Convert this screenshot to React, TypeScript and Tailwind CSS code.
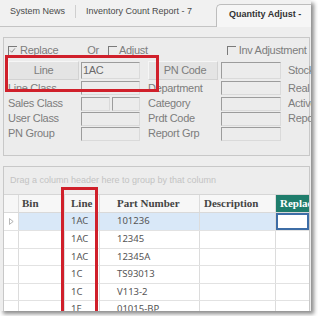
import React from "react";

type Row = { line: string; part: string };

const rows: Row[] = [
  { line: "1AC", part: "101236" },
  { line: "1AC", part: "12345" },
  { line: "1AC", part: "12345A" },
  { line: "1C", part: "TS93013" },
  { line: "1C", part: "V113-2" },
  { line: "1E", part: "01015-BP" },
];

function Field({ className = "" }: { className?: string }) {
  return (
    <div
      className={`h-[14px] shrink-0 border-t-[1.5px] border-l-[1.5px] border-r border-b border-t-[#9c9c9c] border-l-[#9c9c9c] border-r-[#dadada] border-b-[#dadada] bg-[#ececec] ${className}`}
    />
  );
}

function Check({ checked = false }: { checked?: boolean }) {
  return (
    <span className="relative inline-block h-[9px] w-[9px] shrink-0 border-t-[1.5px] border-l-[1.5px] border-[#7a7a7a]">
      {checked && (
        <svg viewBox="0 0 10 10" className="absolute left-0 top-0 h-[7px] w-[7px]">
          <path d="M1.5 5 L4 7.5 L8.5 2" fill="none" stroke="#8a8a8a" strokeWidth="1.4" />
        </svg>
      )}
    </span>
  );
}

function FormRow({ a, b, c, split }: { a: string; b: string; c: string; split?: boolean }) {
  return (
    <div className="flex h-[15px] items-center">
      <span className="w-[73px] shrink-0 whitespace-nowrap">{a}</span>
      {split ? (
        <div className="flex w-[59px] shrink-0 gap-[2px]">
          <Field className="w-[29px]" />
          <Field className="w-[28px]" />
        </div>
      ) : (
        <Field className="w-[59px]" />
      )}
      <span className="ml-[8px] w-[73px] shrink-0 whitespace-nowrap">{b}</span>
      <Field className="w-[60px]" />
      <span className="ml-[7px] whitespace-nowrap">{c}</span>
    </div>
  );
}

export default function App() {
  return (
    <div className="relative h-[316px] w-[318px] overflow-hidden bg-white">
      <div className="relative h-[311px] w-[311px] overflow-hidden bg-[#eeeeee] shadow-[3px_3px_4px_rgba(0,0,0,0.45)]">
        {/* tabs */}
        <div className="flex h-[27px] items-end border-b border-[#c4c4c4] bg-[#f1f1f1] font-['Liberation_Sans',Arial,sans-serif] text-[9px] text-[#4a4a4a]">
          <div className="flex h-full items-center pb-[2px] pl-[10px] whitespace-nowrap">System News</div>
          <div className="mx-[10px] mb-[4px] h-[13px] w-px self-center bg-[#cfcfcf]" />
          <div className="flex h-full items-center pb-[2px] whitespace-nowrap">Inventory Count Report - 7</div>
          <div className="relative -mb-px ml-auto flex h-[23px] w-[95px] shrink-0 items-start rounded-tl-[5px] border border-r-0 border-b-0 border-[#bdbdbd] bg-[#f6f6f6] pl-[12px] pt-[3px] font-bold whitespace-nowrap text-[#333]">
            Quantity Adjust -
          </div>
        </div>

        {/* filter panel */}
        <div className="relative ml-[3px] mt-[10px] h-[119px] w-[307px] border border-[#c8c8c8] bg-[#ececec] pl-[4px] font-['Liberation_Sans',Arial,sans-serif] text-[11px] tracking-[-0.3px] text-[#7d7d7d]">
          <div className="mt-[5px] flex h-[14px] items-center">
            <Check checked />
            <span className="ml-[3px]">Replace</span>
            <span className="ml-[29px]">Or</span>
            <span className="ml-[9px] flex">
              <Check />
            </span>
            <span className="ml-[2px]">Adjust</span>
            <span className="ml-[79px] flex">
              <Check />
            </span>
            <span className="ml-[3px]">Inv Adjustment</span>
          </div>

          <div className="mt-[4px] flex h-[19px] items-center">
            <div className="flex h-[19px] w-[71px] shrink-0 items-center justify-center border border-t-[#f6f6f6] border-l-[#f6f6f6] border-r-[#d2d2d2] border-b-[#d2d2d2] bg-[#e4e4e4]">
              Line
            </div>
            <div className="ml-[2px] flex h-[17px] w-[59px] shrink-0 items-center border-t-[1.5px] border-l-[1.5px] border-r border-b border-t-[#9c9c9c] border-l-[#9c9c9c] border-r-[#dadada] border-b-[#dadada] bg-[#ececec] pl-[1px] text-[#6a6a6a]">
              1AC
            </div>
            <div className="ml-[8px] flex h-[19px] w-[70px] shrink-0 items-center justify-center border border-t-[#f6f6f6] border-l-[#f6f6f6] border-r-[#d2d2d2] border-b-[#d2d2d2] bg-[#e4e4e4] pl-[4px]">
              PN Code
            </div>
            <Field className="ml-[3px] h-[17px] w-[60px]" />
            <span className="ml-[7px]">Stock</span>
          </div>

          <div className="flex h-[16px] items-center">
            <span className="w-[73px] shrink-0">Line Class</span>
            <Field className="w-[59px]" />
            <span className="ml-[8px] w-[73px] shrink-0">Department</span>
            <Field className="w-[60px]" />
            <span className="ml-[7px]">Real</span>
          </div>
          <FormRow a="Sales Class" b="Category" c="Active" split />
          <FormRow a="User Class" b="Prdt Code" c="Report" />
          <FormRow a="PN Group" b="Report Grp" c="" />
        </div>

        {/* grid */}
        <div className="ml-[3px] mt-[10px] h-[150px] w-[307px] overflow-hidden border border-[#c8c8c8] bg-white">
          <div className="flex h-[28px] items-center border-b border-[#d6d6d6] bg-[#ededed] pl-[6px] font-['Liberation_Sans',Arial,sans-serif] text-[9px] text-[#c3c3c3]">
            Drag a column header here to group by that column
          </div>
          <div className="flex h-[18px] border-b border-[#d9d9d9] bg-[#f7f7f7] font-['Liberation_Serif',serif] text-[11px] font-bold text-[#444]">
            <div className="w-[15px] shrink-0 border-r border-[#dcdcdc]" />
            <div className="flex w-[46px] shrink-0 items-center border-r border-[#dcdcdc] pl-[3px]">Bin</div>
            <div className="flex w-[35px] shrink-0 items-center border-r border-[#dcdcdc] pl-[6px]">Line</div>
            <div className="flex w-[100px] shrink-0 items-center border-r border-[#dcdcdc] pl-[17px]">Part Number</div>
            <div className="flex w-[76px] shrink-0 items-center border-r border-[#dcdcdc] pl-[4px]">Description</div>
            <div className="flex flex-1 items-center bg-[#1f7d6c] pl-[4px] text-white">Replace</div>
          </div>
          {rows.map((r, i) => {
            const sel = i === 0;
            return (
              <div
                key={i}
                className={`flex border-b border-[#e2e2e2] font-['Noto_Sans',sans-serif] text-[9.5px] text-[#555] ${sel ? "h-[18px]" : "h-[17.5px]"}`}
              >
                <div className="flex w-[15px] shrink-0 items-center justify-center border-r border-[#dcdcdc]">
                  {sel && (
                    <svg viewBox="0 0 6 8" className="h-[7px] w-[5px]">
                      <path d="M0.5 0.5 L5 4 L0.5 7.5 Z" fill="none" stroke="#9a9a9a" strokeWidth="0.9" />
                    </svg>
                  )}
                </div>
                <div className={`w-[46px] shrink-0 border-r border-[#dcdcdc] ${sel ? "bg-[#d9e8f8]" : ""}`} />
                <div className={`flex w-[35px] shrink-0 items-center border-r border-[#dcdcdc] pl-[6px] ${sel ? "bg-[#d9e8f8]" : ""}`}>
                  {r.line}
                </div>
                <div className={`flex w-[100px] shrink-0 items-center border-r border-[#dcdcdc] pl-[17px] ${sel ? "bg-[#d9e8f8]" : ""}`}>
                  {r.part}
                </div>
                <div className={`w-[76px] shrink-0 border-r border-[#dcdcdc] ${sel ? "bg-[#d9e8f8]" : ""}`} />
                <div className={`flex-1 ${sel ? "border-2 border-[#3d6da6] bg-white" : ""}`} />
              </div>
            );
          })}
        </div>

        {/* annotation boxes */}
        <div className="pointer-events-none absolute left-[5px] top-[55px] h-[37px] w-[154px] border-[3px] border-[#d0202b]" />
        <div className="pointer-events-none absolute left-[61px] top-[187px] h-[140px] w-[37px] border-[3px] border-b-0 border-[#d0202b]" />
      </div>
    </div>
  );
}
